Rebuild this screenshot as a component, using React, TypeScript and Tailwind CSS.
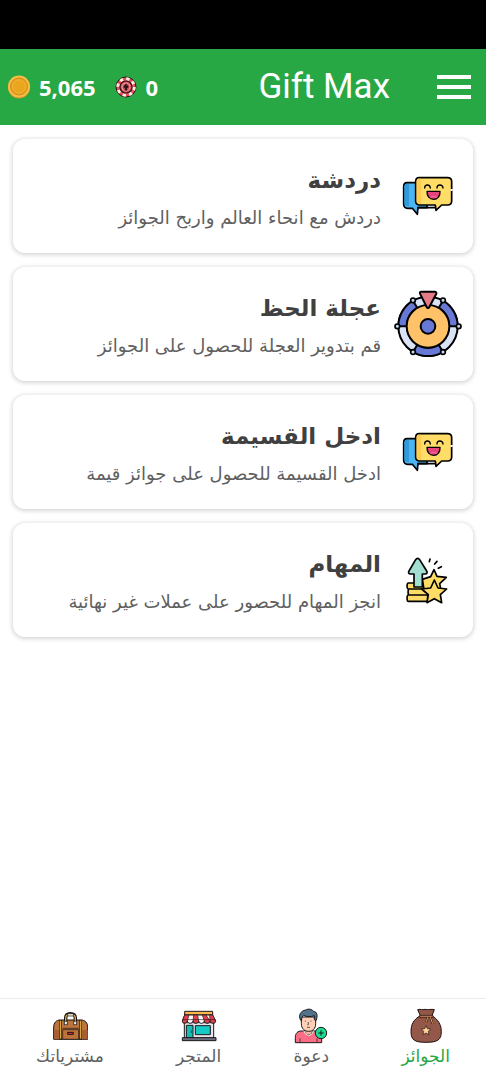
import type { ReactNode } from "react";

const ChatIcon = () => (
  <svg viewBox="27 24 204 204" className="size-[68px] shrink-0" fill="none" stroke="#000" strokeWidth="5" strokeLinejoin="round" strokeLinecap="round">
    <path d="M66 86h60v75H99l-2 20-15-18H68c-7 0-12-5-12-12V98c0-7 4-12 10-12z" fill="#4ab5f0" />
    <path d="M61 90h11v66h-7c-4 0-7-4-7-8V97z" fill="#2f99dc" stroke="none" />
    <path d="M99 161h54" />
    <path d="M102 71h86c7 0 12 5 12 12v58c0 7-5 12-12 12h-18l-17 16-2-16h-47c-7 0-12-5-12-12V83c0-7 4-12 10-12z" fill="#ffdd66" />
    <path d="M99 74h9v76h-5c-5 0-8-4-8-9V82c0-4 1-7 4-8z" fill="#ffcb53" stroke="none" />
    <path d="M200 105v6" stroke="#fff" strokeWidth="6" strokeLinecap="butt" />
    <path d="M119 102c0-12 16-12 17 0M156 102c0-12 17-12 18 0" strokeWidth="4" />
    <path d="M126 112h39c1 14-7 24-19 24s-21-10-20-24z" fill="#e8437f" strokeWidth="4" />
    <path d="M135 132c6-6 16-6 22 0" stroke="#ff8fae" strokeWidth="2" />
  </svg>
);

const WheelIcon = () => (
  <svg viewBox="27 30 204 204" className="size-[68px] shrink-0" fill="none" stroke="#000" strokeWidth="6" strokeLinejoin="round">
    <circle cx="129" cy="139" r="89" fill="#dbe4f7" />
    <path d="M84 62A89 89 0 0 0 40 139h25a64 64 0 0 1 32-55z" fill="#6878d6" />
    <path d="M174 62a89 89 0 0 1 44 77h-25a64 64 0 0 0-32-55z" fill="#6878d6" />
    <path d="M84 216a89 89 0 0 0 90 0l-13-22a64 64 0 0 1-64 0z" fill="#6878d6" />
    <circle cx="129" cy="139" r="64" fill="#ffc269" />
    <circle cx="129" cy="139" r="22" fill="#6878d6" />
    <g fill="#c5dcf5" strokeWidth="5">
      <circle cx="84" cy="61" r="7" />
      <circle cx="174" cy="61" r="7" />
      <circle cx="37" cy="139" r="7" />
      <circle cx="221" cy="139" r="7" />
      <circle cx="84" cy="216" r="7" />
      <circle cx="174" cy="216" r="7" />
    </g>
    <path d="M109 35h40c4 0 6 3 5 6l-21 40c-2 4-6 4-8 0l-20-40c-1-3 0-6 4-6z" fill="#e47c87" />
  </svg>
);

const TasksIcon = () => (
  <svg viewBox="27 18 204 204" className="size-[68px] shrink-0" fill="none" stroke="#000" strokeWidth="5" strokeLinejoin="round" strokeLinecap="round">
    <path d="M70 129h60v18H70c-5 0-5-18 0-18zM73 147h55v18H73c-5 0-5-18 0-18zM70 165h58v19H70c-5 0-5-19 0-19z" fill="#ffdc68" />
    <path d="M147 89l9 20 28 3-20 19 4 20-50 3-6-36 25-8z" fill="#ffdc68" />
    <path d="M148 120l11 24 26 3-19 17 4 24-22-12-22 12 4-24-20-17 27-3z" fill="#ffdc68" />
    <path d="M98 55c2 0 4 1 6 4l21 34c3 5 1 9-5 9h-8v39H87v-39H77c-6 0-8-4-5-9l20-34c2-3 4-4 6-4z" fill="#a2dfd2" />
    <path d="M133 65l2-8M149 72l7-8M160 85l9-5" />
  </svg>
);

const PurchasesIcon = () => (
  <svg viewBox="156 54 108 108" className="size-9" fill="none" stroke="#17120f" strokeWidth="3" strokeLinejoin="round">
    <path d="M161 148v-36c0-14 8-22 20-22h62c12 0 20 8 20 22v36z" fill="#bd743d" />
    <path d="M162 120h17v28h-17zM246 120h17v28h-17z" fill="#a65f35" stroke="none" />
    <path d="M182 90v58M241 90v58" stroke="#1b1511" strokeWidth="7" />
    <path d="M182 92v54M241 92v54" stroke="#ffc84e" strokeWidth="3" />
    <path d="M188 115h48M188 119h48M188 119v28M236 119v28" strokeWidth="2" />
    <path d="M197 105V84c0-9 5-13 14-13s15 4 15 13v21" stroke="#17120f" strokeWidth="10" />
    <path d="M197 104V84c0-8 5-11 14-11s15 3 15 11v20" stroke="#d6a94d" strokeWidth="4" />
    <path d="M203 71h17v7h-17zM193 94h9v10h-9zM221 94h9v10h-9z" fill="#f2eee6" strokeWidth="2" />
    <path d="M203 127h17v6h-17z" fill="#e63d3d" strokeWidth="3" />
  </svg>
);

const StoreIcon = () => (
  <svg viewBox="543 54 108 108" className="size-9" fill="none" stroke="#191919" strokeWidth="3" strokeLinejoin="round">
    <path d="M553 98h88v46h-88z" fill="#e9e4ee" />
    <path d="M559 106h20v37h-20z" fill="#16bdb5" />
    <path d="M586 107h45v27h-45z" fill="#13cbc4" />
    <path d="M574 121v8" strokeWidth="2" />
    <path d="M547 143h101v9H547z" fill="#6d6e7d" />
    <path d="M554 64h84v11h-84z" fill="#ffb64c" />
    <path d="M554 75h84l9 18c0 9-14 9-17 0-2 9-15 9-17 0-2 9-15 9-17 0-2 9-15 9-17 0-2 9-15 9-17 0-3 9-15 9-15 0z" fill="#fff" />
    <path d="M554 75h13l-5 18c-3 8-15 8-15 0zM581 75h12l3 18c-2 8-15 8-17 0zM607 75h11l12 18c-2 8-15 8-17 0zM629 75h9l9 18c0 8-14 8-17 0z" fill="#e83e4b" strokeWidth="2" />
    <path d="M548 89h98" strokeWidth="2" />
  </svg>
);

const InviteIcon = () => (
  <svg viewBox="153 54 108 108" className="size-9" fill="none" stroke="#17191d" strokeWidth="3" strokeLinejoin="round">
    <path d="M160 158v-16c0-13 8-19 18-19h42c12 0 19 7 19 19v16z" fill="#fa6d84" />
    <path d="M174 145v13M225 145v13" strokeWidth="2" />
    <path d="M188 110v14c0 14 23 14 23 0v-14z" fill="#efb59d" />
    <path d="M186 123c4 17 24 17 28 0" stroke="#fff" strokeWidth="3" />
    <path d="M178 81h43v20c0 15-9 23-21 23s-22-8-22-23z" fill="#ffd0b5" />
    <path d="M176 91c-8-14 0-29 15-31 8-5 20-2 23 4 12 1 14 13 8 28l-5-3V77c-9 4-24 4-32-1-5 3-6 8-6 14z" fill="#52738a" />
    <path d="M190 92v3M207 92v3M199 96v8h-3M195 112h9" strokeWidth="2" />
    <circle cx="237" cy="129" r="17" fill="#20dc91" />
    <path d="M237 121v16M229 129h16" />
  </svg>
);

const RewardsIcon = () => (
  <svg viewBox="496 54 108 108" className="size-9" fill="none" stroke="#21130f" strokeWidth="3" strokeLinejoin="round">
    <path d="M525 59c9-3 14 2 22-1 11 3 19-2 28 1l-7 18c19 12 28 28 28 48 0 25-12 32-46 32s-45-7-45-32c0-22 8-37 28-48z" fill="#935849" />
    <path d="M531 76h40v7h-40z" fill="#b96f51" strokeWidth="2" />
    <path d="M555 82l-4 14M563 82l7 20" stroke="#21130f" strokeWidth="6" />
    <path d="M555 82l-4 13M563 82l7 19" stroke="#efab62" strokeWidth="3" />
    <path d="M550 107l4 9 10 1-7 7 2 10-9-5-9 5 2-10-7-7 10-1z" fill="#ffd49b" strokeWidth="2" />
  </svg>
);

const CoinIcon = () => (
  <svg viewBox="0 0 24 24" className="size-6">
    <circle cx="12" cy="12.5" r="11" fill="#dc9122" />
    <circle cx="12" cy="11.5" r="11" fill="#f7bd45" />
    <circle cx="12" cy="11.5" r="8.5" fill="#e8a21c" stroke="#d48c1c" />
    <circle cx="12" cy="11.5" r="6.5" fill="#eba61f" stroke="#f3b73d" strokeWidth=".8" />
  </svg>
);

const ChipIcon = () => (
  <svg viewBox="0 0 24 24" className="size-6" fill="none">
    <circle cx="12" cy="12" r="10" fill="#e64c5b" stroke="#2b1719" strokeWidth="1" />
    <circle cx="12" cy="12" r="8.2" stroke="#fff0e2" strokeWidth="3" strokeDasharray="3.2 3.24" />
    <circle cx="12" cy="12" r="6" fill="#e64c5b" stroke="#2b1719" strokeWidth="1.2" />
    <circle cx="12" cy="12" r="4" fill="#c9505c" stroke="#f2a7a7" strokeWidth=".8" />
    <path d="M12 8.5l2.8 3.6-2 1.3.7 2h-3l.7-2-2-1.3z" fill="#2b1719" />
  </svg>
);

const cards = [
  { title: "دردشة", text: "دردش مع انحاء العالم واربح الجوائز", icon: <ChatIcon /> },
  { title: "عجلة الحظ", text: "قم بتدوير العجلة للحصول على الجوائز", icon: <WheelIcon /> },
  { title: "ادخل القسيمة", text: "ادخل القسيمة للحصول على جوائز قيمة", icon: <ChatIcon /> },
  { title: "المهام", text: "انجز المهام للحصور على عملات غير نهائية", icon: <TasksIcon /> },
];

const tabs = [
  { label: "الجوائز", icon: <RewardsIcon />, active: true },
  { label: "دعوة", icon: <InviteIcon /> },
  { label: "المتجر", icon: <StoreIcon /> },
  { label: "مشترياتك", icon: <PurchasesIcon /> },
];

function Balance({ icon, value }: { icon: ReactNode; value: string }) {
  return (
    <span className="flex items-center gap-2">
      {icon}
      <span className="font-['Open_Sans',sans-serif] text-[22px] leading-8 font-bold">{value}</span>
    </span>
  );
}

export default function App() {
  return (
    <div dir="rtl" className="flex min-h-screen flex-col bg-white font-['DejaVu_Sans',sans-serif]">
      {/* Status bar */}
      <div className="h-[49px] bg-black" />

      <header className="flex h-[76px] items-center justify-between bg-[#28a745] pr-[15px] pl-[7px] text-white">
        <div className="flex items-center gap-[47px]">
          <button type="button" aria-label="القائمة" className="flex flex-col gap-[6px]">
            <span className="h-1 w-[34px] bg-white" />
            <span className="h-1 w-[34px] bg-white" />
            <span className="h-1 w-[34px] bg-white" />
          </button>
          <h1 dir="ltr" className="font-['Roboto',sans-serif] text-[35px] leading-10 whitespace-nowrap">Gift Max</h1>
        </div>
        <div dir="ltr" className="flex items-center gap-[18px]">
          <Balance icon={<CoinIcon />} value="5,065" />
          <Balance icon={<ChipIcon />} value="0" />
        </div>
      </header>

      <main className="flex grow flex-col gap-[14px] px-[13px] py-[14px]">
        {cards.map((card) => (
          <a
            key={card.title}
            href="#"
            className="flex h-[114px] items-center gap-[13px] rounded-xl bg-white px-[11px] shadow-[0_1px_4px_1px_rgba(0,0,0,0.16)]"
          >
            {card.icon}
            <div className="min-w-0 pt-1">
              <h2 className="text-[23px] leading-10 font-bold whitespace-nowrap text-[#404040]">{card.title}</h2>
              <p className="text-lg leading-9 whitespace-nowrap text-[#606060]">{card.text}</p>
            </div>
          </a>
        ))}
      </main>

      <nav className="flex h-[82px] justify-around border-t border-[#ececec] pt-[9px]">
        {tabs.map((tab) => (
          <a key={tab.label} href="#" className={`flex flex-col items-center ${tab.active ? "text-[#28a745]" : "text-[#606060]"}`}>
            {tab.icon}
            <span className="text-[17px] leading-6">{tab.label}</span>
          </a>
        ))}
      </nav>
    </div>
  );
}
